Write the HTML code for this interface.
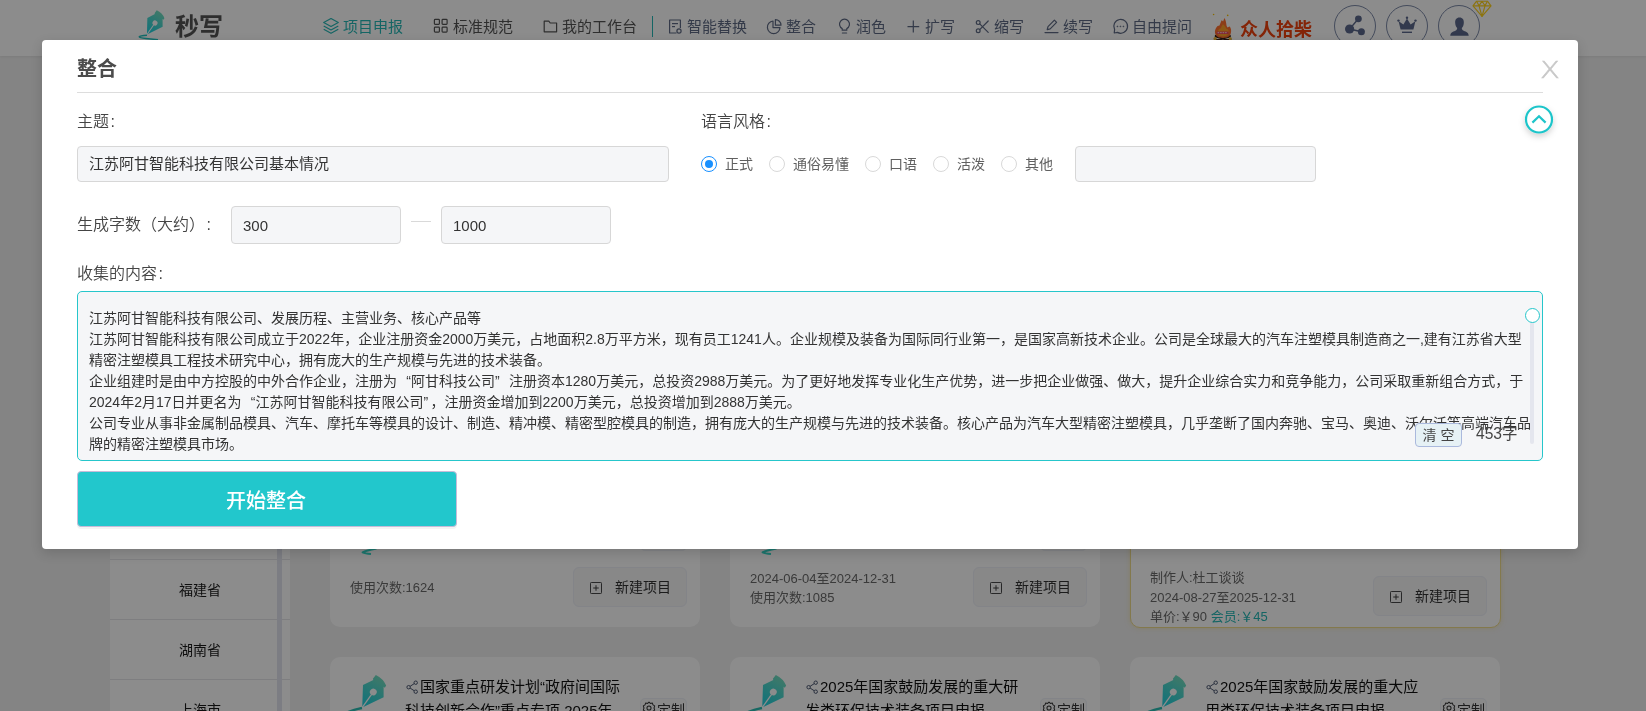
<!DOCTYPE html>
<html lang="zh-CN">
<head>
<meta charset="utf-8">
<title>秒写</title>
<style>
*{box-sizing:border-box;margin:0;padding:0}
html,body{width:1646px;height:711px;overflow:hidden;background:#f0f0f0;font-family:"Liberation Sans","Noto Sans CJK SC",sans-serif;}
#root{position:absolute;left:0;top:0;width:1646px;height:711px;will-change:transform}
#page{position:absolute;left:0;top:0;width:1646px;height:711px;overflow:hidden;background:#f0f0f0;color:#333}
#hdr{position:absolute;left:0;top:0;width:1646px;height:56px;background:#fff;box-shadow:0 1px 2px rgba(0,0,0,.06)}
.abs{position:absolute}
.nav{position:absolute;top:16px;height:22px;line-height:22px;font-size:15px;color:#5f6b85;white-space:nowrap}
.nav.dk{color:#555}
.nav.on{color:#26b8b6}
.ico{position:absolute}
.circ{position:absolute;top:5px;width:42px;height:42px;border:1px solid #7d8aa8;border-radius:50%}
.sl{left:110px;width:180px;height:1px;background:#e6e6ea}
.si{left:110px;width:180px;text-align:center;font-size:14px;line-height:22px;color:#1a1a1a}
.cd{position:absolute;width:370px;background:#fff;border-radius:10px}
.mt{position:absolute;font-size:13px;line-height:19px;color:#6a6a6a;white-space:nowrap}
.nb{position:absolute;width:114px;height:40px;background:#f7f7f8;border:1px solid #eef1f7;border-radius:6px;font-size:14px;line-height:22px;color:#333;white-space:nowrap}
.tt{position:absolute;font-size:15px;line-height:22px;color:#111;white-space:nowrap}
.tg{position:absolute;width:47px;height:24px;border:1px solid #eef1f7;border-radius:5px;background:#f9f9fa;font-size:14px;line-height:22px;color:#333;white-space:nowrap}
.q2{display:inline-block;width:5px}
#mask{position:absolute;left:0;top:0;width:1646px;height:711px;background:rgba(0,0,0,.45)}
#modal{position:absolute;left:42px;top:40px;width:1536px;height:509px;background:#fff;border-radius:4px;box-shadow:0 4px 12px rgba(0,0,0,.15);color:#444}
#modal .t{position:absolute;white-space:nowrap}
.lbl{font-size:16px;line-height:24px;color:#444;font-weight:350}
.inp{position:absolute;background:#f5f6f8;border:1px solid #d7d7d7;border-radius:4px;font-size:15px;color:#333;line-height:34px;padding-left:11px;white-space:nowrap}
.rad{position:absolute;top:116px;width:16px;height:16px;border:1px solid #d9d9d9;border-radius:50%;background:#fff}
.rad.on{border-color:#1890ff}
.rad.on:after{content:"";position:absolute;left:3px;top:3px;width:8px;height:8px;border-radius:50%;background:#1890ff}
.rl{position:absolute;top:113px;font-size:14px;line-height:22px;color:#606060;white-space:nowrap}
#ta{position:absolute;left:35px;top:251px;width:1466px;height:170px;border:1px solid #26c6cb;border-radius:5px;background:#f5f6f8;overflow:hidden}
.ql,.qr{display:inline-block;width:14px}.ql{text-align:right}.qr{text-align:left}
.cl{margin-left:1.6px}
#ta .ln{position:absolute;left:11px;white-space:nowrap;font-size:14px;line-height:21px;height:21px;color:#333}
</style>
</head>
<body>
<div id="root">
<div id="page">
  <div id="hdr">
    <!-- logo -->
    <svg class="ico" style="left:130px;top:0" width="50" height="56" viewBox="130 0 50 56">
      <defs><linearGradient id="lg" x1="0" y1="0" x2="0" y2="1"><stop offset="0" stop-color="#72dcc0"/><stop offset="1" stop-color="#16d0e2"/></linearGradient></defs>
      <g transform="translate(155 23) rotate(35) scale(0.737)">
        <path d="M0 19 L11.4 -1.8 L5.4 -10.2 L6.9 -10.2 L6.7 -12.7 Q0.5 -16.8 -7.9 -15.4 L-8.1 -10.6 L-7 -9.8 L-12.4 .4 Z" fill="url(#lg)"/>
        <circle cx="0" cy="0" r="3.4" fill="#fff"/>
        <path d="M0 2 L0 19" stroke="#fff" stroke-width="1.4"/>
      </g>
      <path d="M147 35.2 Q140 35.4 139.3 36.9 Q139.6 38 146 38.5 L158 39.7" fill="none" stroke="#22c4c0" stroke-width="1.6"/>
    </svg>
    <div class="abs" style="left:175px;top:10px;font-size:24px;line-height:34px;font-weight:bold;color:#555;white-space:nowrap">秒写</div>

    <!-- nav -->
    <svg class="ico" style="left:322px;top:17px" width="18" height="18" viewBox="0 0 18 18" fill="none" stroke="#26b8b6" stroke-width="1.2" stroke-linejoin="round"><path d="M9 1.5 L16.3 5.5 L9 9.5 L1.7 5.5 Z"/><path d="M1.7 9 L9 13 L16.3 9"/><path d="M1.7 12.3 L9 16.3 L16.3 12.3"/></svg>
    <div class="nav on" style="left:343px">项目申报</div>

    <svg class="ico" style="left:433px;top:18px" width="16" height="16" viewBox="0 0 16 16" fill="none" stroke="#555" stroke-width="1.2"><rect x="1.4" y="1.4" width="5" height="5" rx=".8"/><rect x="9.1" y="1.4" width="5" height="5" rx=".8"/><rect x="1.4" y="9.1" width="5" height="5" rx=".8"/><rect x="9.1" y="9.1" width="5" height="5" rx=".8"/></svg>
    <div class="nav dk" style="left:453px">标准规范</div>

    <svg class="ico" style="left:543px;top:19px" width="16" height="16" viewBox="0 0 16 16" fill="none" stroke="#555" stroke-width="1.2" stroke-linejoin="round"><path d="M1.2 2.2 H5.8 L7.2 4 H13.6 V12.8 H1.2 Z"/></svg>
    <div class="nav dk" style="left:562px">我的工作台</div>

    <div class="abs" style="left:652px;top:16px;width:1px;height:21px;background:#26b8b6"></div>

    <svg class="ico" style="left:668px;top:18px" width="16" height="18" viewBox="0 0 16 18" fill="none" stroke="#5f6b85" stroke-width="1.2" stroke-linejoin="round"><path d="M8.5 15 H1.6 V2 H12.4 V10"/><path d="M4 5.6 H10"/><path d="M4 8.6 H7"/><circle cx="11" cy="13" r="2.1"/></svg>
    <div class="nav" style="left:687px">智能替换</div>

    <svg class="ico" style="left:766px;top:18px" width="17" height="17" viewBox="0 0 17 17" fill="none" stroke="#5f6b85" stroke-width="1.2" stroke-linejoin="round"><path d="M7 3 A6.3 6.3 0 1 0 14 9.6 H7 Z"/><path d="M9.4 1.6 A5.6 5.6 0 0 1 15 7.2 H9.4 Z"/></svg>
    <div class="nav" style="left:786px">整合</div>

    <svg class="ico" style="left:837px;top:18px" width="15" height="18" viewBox="0 0 15 18" fill="none" stroke="#5f6b85" stroke-width="1.2" stroke-linecap="round" stroke-linejoin="round"><path d="M5.2 12.2 V10.6 A5 5 0 1 1 9.8 10.6 V12.2 Z"/><path d="M5.4 15 H9.6"/></svg>
    <div class="nav" style="left:856px">润色</div>

    <svg class="ico" style="left:906px;top:19px" width="15" height="15" viewBox="0 0 15 15" fill="none" stroke="#5f6b85" stroke-width="1.2"><path d="M7.3 1.6 V13.6 M1.5 7.7 H13.2"/></svg>
    <div class="nav" style="left:925px">扩写</div>

    <svg class="ico" style="left:975px;top:19px" width="15" height="16" viewBox="0 0 15 16" fill="none" stroke="#5f6b85" stroke-width="1.2" stroke-linecap="round"><circle cx="3.2" cy="3.6" r="1.9"/><circle cx="3.2" cy="11.8" r="1.9"/><path d="M4.7 4.8 L13.2 13.4 M4.7 10.6 L13.2 2"/></svg>
    <div class="nav" style="left:994px">缩写</div>

    <svg class="ico" style="left:1044px;top:18px" width="16" height="17" viewBox="0 0 16 17" fill="none" stroke="#5f6b85" stroke-width="1.2" stroke-linecap="round" stroke-linejoin="round"><path d="M3.2 11.6 L4 8.6 L10.4 2.2 L12.6 4.4 L6.2 10.8 Z"/><path d="M1 14.6 H14"/></svg>
    <div class="nav" style="left:1063px">续写</div>

    <svg class="ico" style="left:1112px;top:18px" width="17" height="17" viewBox="0 0 17 17" fill="none" stroke="#5f6b85" stroke-width="1.2" stroke-linejoin="round"><path d="M2.2 15 L2.6 11.6 A6.9 6.9 0 1 1 5.4 14.4 Z"/><circle cx="5.4" cy="8.4" r=".5" fill="#5f6b85" stroke-width=".6"/><circle cx="8.4" cy="8.4" r=".5" fill="#5f6b85" stroke-width=".6"/><circle cx="11.4" cy="8.4" r=".5" fill="#5f6b85" stroke-width=".6"/></svg>
    <div class="nav" style="left:1132px">自由提问</div>

    <!-- fire -->
    <svg class="ico" style="left:1206px;top:8px" width="36" height="36" viewBox="1206 8 36 36">
      <circle cx="1213.6" cy="14.5" r=".8" fill="#f7c100"/><circle cx="1227.7" cy="15.4" r=".8" fill="#f7c100"/>
      <path d="M1216 36.2 L1230.6 40.4 M1229.6 36.2 L1215 40.4" stroke="#3a2016" stroke-width="2.6" stroke-linecap="round"/>
      <path d="M1224.5 18 C1225.6 19.6 1226.2 22.5 1226.5 25.4 C1226.9 26.6 1227.3 27.2 1227.8 27.4 C1228.5 26.9 1229.2 26.4 1229.7 26.4 C1230.6 27.8 1231.3 29.5 1231.1 31.4 C1231 34 1229.8 36 1228 37 C1226 38.2 1220 38.2 1218 37 C1216 36 1214.8 34 1214.9 31.6 C1215.2 29 1216.4 27.2 1217.6 26 C1218.3 25.8 1219 25.8 1219.5 25.6 C1220.3 23.6 1220.9 21.8 1221.6 20.2 C1222.2 20.6 1222.7 21 1223.1 21.4 C1223.6 20.2 1224.1 19 1224.5 18 Z" fill="#ff6f2e"/>
      <path d="M1222.8 24.2 C1224.6 25.6 1225.8 27.4 1226.6 29 C1227.4 28.8 1227.9 29.2 1228.4 30 C1228.9 32 1228.4 34.6 1226.6 35.8 C1224.6 36.8 1221.4 36.8 1219.6 35.8 C1217.8 34.6 1217.3 32.2 1218.2 30.4 C1218.9 29.2 1219.7 28.6 1220.6 28.6 C1221.2 27.2 1222 25.6 1222.8 24.2 Z" fill="#ffa228"/>
      <rect x="1216.6" y="31.4" width="12" height="2.6" rx="1.3" fill="#ee4560"/>
      <path d="M1217.6 32.7 H1227.6" stroke="#ffd9de" stroke-width="1" stroke-dasharray="1.6 .9"/>
      <circle cx="1215.1" cy="38.6" r="1.6" fill="#e9b535"/><circle cx="1230.2" cy="38.6" r="1.6" fill="#e9b535"/>
    </svg>
    <div class="abs" style="left:1240px;top:17px;font-size:18px;line-height:26px;font-weight:bold;color:#f0420e;white-space:nowrap">众人拾柴</div>

    <!-- circles -->
    <div class="circ" style="left:1334px"></div>
    <svg class="ico" style="left:1344px;top:14px" width="22" height="24" viewBox="0 0 22 24"><g fill="#5c698c" stroke="#5c698c"><path d="M14.4 4.8 L5.6 15 L17.4 17.7" fill="none" stroke-width="1.4"/><circle cx="14.4" cy="4.8" r="3.4" stroke="none"/><circle cx="5.6" cy="15" r="4.6" stroke="none"/><circle cx="17.4" cy="17.7" r="3.5" stroke="none"/></g></svg>
    <div class="circ" style="left:1386px"></div>
    <svg class="ico" style="left:1397px;top:16px" width="20" height="19" viewBox="0 0 20 19" fill="#5c698c"><path d="M3.6 13.6 L1.6 5.2 L6.4 8.6 L10 2.4 L13.6 8.6 L18.4 5.2 L16.4 13.6 Z"/><circle cx="1.5" cy="4.6" r="1.2"/><circle cx="10" cy="1.8" r="1.2"/><circle cx="18.5" cy="4.6" r="1.2"/><rect x="5" y="15.6" width="10" height="1.4"/></svg>
    <div class="circ" style="left:1438px"></div>
    <svg class="ico" style="left:1448.5px;top:16.5px" width="21" height="20" viewBox="0 0 20 19" fill="#5c698c"><path d="M10 .5 C13 .5 14.3 2.8 14.1 5.6 C14 8 13 9.6 12.2 10.4 C12.2 11.6 12.6 12.4 14 13 C16.6 14 18.6 14.6 18.8 17.8 H1.2 C1.4 14.6 3.4 14 6 13 C7.4 12.4 7.8 11.6 7.8 10.4 C7 9.6 6 8 5.9 5.6 C5.7 2.8 7 .5 10 .5 Z"/></svg>
    <!-- diamond -->
    <svg class="ico" style="left:1472px;top:0" width="20" height="18" viewBox="0 0 20 18" fill="none" stroke="#ffd21a" stroke-width="1.15" stroke-linejoin="round"><path d="M4.6 1.2 H15.4 L19 5.8 L10 16.4 L1 5.8 Z"/><path d="M1 5.8 H19 M4.6 1.2 L7 5.8 L10 16.4 L13 5.8 L15.4 1.2 M10 1.2 L7 5.8 M10 1.2 L13 5.8"/></svg>
  </div>
  <div id="bg">
    <svg width="0" height="0" style="position:absolute"><defs><linearGradient id="lg2" x1="0" y1="0" x2="0" y2="1"><stop offset="0" stop-color="#72dcc0"/><stop offset="1" stop-color="#16d0e2"/></linearGradient></defs></svg>
    <!-- sidebar -->
    <div class="abs" style="left:110px;top:56px;width:180px;height:655px;background:#fff"></div>
    <div class="abs sl" style="top:559px"></div><div class="abs sl" style="top:619px"></div><div class="abs sl" style="top:679px"></div>
    <div class="abs si" style="top:579px">福建省</div>
    <div class="abs si" style="top:639px">湖南省</div>
    <div class="abs si" style="top:699px">上海市</div>
    <div class="abs" style="left:277px;top:56px;width:5px;height:655px;background:#e2e4ee"></div>

    <!-- row 1 cards -->
    <div class="cd" style="left:330px;top:300px;height:326.5px"></div>
    <div class="cd" style="left:730px;top:300px;height:326.5px"></div>
    <div class="cd" style="left:1130px;top:300px;width:370.5px;height:327.5px;border:1px solid #efdc8c;box-shadow:0 0 5px rgba(240,220,140,.55)"></div>
    <svg class="abs" style="left:355px;top:540px" width="30" height="16" viewBox="0 0 30 16" fill="none" stroke="#36d8c8" stroke-width="2" stroke-linejoin="round"><path d="M21.5 8.4 Q11 10.4 7.6 12.3 Q10 13.4 16 13.9"/></svg>
    <svg class="abs" style="left:755px;top:540px" width="30" height="16" viewBox="0 0 30 16" fill="none" stroke="#36d8c8" stroke-width="2" stroke-linejoin="round"><path d="M21.5 8.4 Q11 10.4 7.6 12.3 Q10 13.4 16 13.9"/></svg>
    <div class="tg" style="left:640px;top:527px"></div><div class="tg" style="left:1040px;top:527px"></div>
    <div class="mt" style="left:350px;top:578px">使用次数:1624</div>
    <div class="nb" style="left:573px;top:567px"><svg class="abs" style="left:16px;top:13.5px" width="12" height="12" viewBox="0 0 13 13" fill="none" stroke="#333" stroke-width="1"><rect x=".5" y=".5" width="12" height="12" rx="1"/><path d="M6.5 3.5 V9.5 M3.5 6.5 H9.5"/></svg><span class="abs" style="left:41px;top:8px">新建项目</span></div>
    <div class="mt" style="left:750px;top:569px">2024-06-04至2024-12-31</div>
    <div class="mt" style="left:750px;top:588px">使用次数:1085</div>
    <div class="nb" style="left:973px;top:567px"><svg class="abs" style="left:16px;top:13.5px" width="12" height="12" viewBox="0 0 13 13" fill="none" stroke="#333" stroke-width="1"><rect x=".5" y=".5" width="12" height="12" rx="1"/><path d="M6.5 3.5 V9.5 M3.5 6.5 H9.5"/></svg><span class="abs" style="left:41px;top:8px">新建项目</span></div>
    <div class="mt" style="left:1150px;top:568px">制作人:杜工谈谈</div>
    <div class="mt" style="left:1150px;top:588px">2024-08-27至2025-12-31</div>
    <div class="mt" style="left:1150px;top:607px">单价:￥90 <span style="color:#26b8b6">会员:￥45</span></div>
    <div class="nb" style="left:1373px;top:576px"><svg class="abs" style="left:16px;top:13.5px" width="12" height="12" viewBox="0 0 13 13" fill="none" stroke="#333" stroke-width="1"><rect x=".5" y=".5" width="12" height="12" rx="1"/><path d="M6.5 3.5 V9.5 M3.5 6.5 H9.5"/></svg><span class="abs" style="left:41px;top:8px">新建项目</span></div>

    <!-- row 2 cards -->
    <div class="cd" style="left:330px;top:657px;height:200px"></div>
    <div class="cd" style="left:730px;top:657px;height:200px"></div>
    <div class="cd" style="left:1130px;top:657px;height:200px"></div>
    <svg class="abs" style="left:340px;top:660px" width="60" height="51" viewBox="340 660 60 51"><g transform="translate(373.3 692) rotate(35.6) scale(1)"><path d="M0 19 L11.4 -1.8 L5.4 -10.2 L6.9 -10.2 L6.7 -12.7 Q0.5 -16.8 -7.9 -15.4 L-8.1 -10.6 L-7 -9.8 L-12.4 .4 Z" fill="url(#lg2)"/><circle cx="0" cy="0" r="3.4" fill="#fff"/><path d="M0 2 L0 19.5" stroke="#fff" stroke-width="1.3"/></g><path d="M362 708 Q352 710 346 713" fill="none" stroke="#2bbfb5" stroke-width="2.4"/></svg>
    <svg class="abs" style="left:740px;top:660px" width="60" height="51" viewBox="340 660 60 51"><g transform="translate(373.3 692) rotate(35.6) scale(1)"><path d="M0 19 L11.4 -1.8 L5.4 -10.2 L6.9 -10.2 L6.7 -12.7 Q0.5 -16.8 -7.9 -15.4 L-8.1 -10.6 L-7 -9.8 L-12.4 .4 Z" fill="url(#lg2)"/><circle cx="0" cy="0" r="3.4" fill="#fff"/><path d="M0 2 L0 19.5" stroke="#fff" stroke-width="1.3"/></g><path d="M362 708 Q352 710 346 713" fill="none" stroke="#2bbfb5" stroke-width="2.4"/></svg>
    <svg class="abs" style="left:1140px;top:660px" width="60" height="51" viewBox="340 660 60 51"><g transform="translate(373.3 692) rotate(35.6) scale(1)"><path d="M0 19 L11.4 -1.8 L5.4 -10.2 L6.9 -10.2 L6.7 -12.7 Q0.5 -16.8 -7.9 -15.4 L-8.1 -10.6 L-7 -9.8 L-12.4 .4 Z" fill="url(#lg2)"/><circle cx="0" cy="0" r="3.4" fill="#fff"/><path d="M0 2 L0 19.5" stroke="#fff" stroke-width="1.3"/></g><path d="M362 708 Q352 710 346 713" fill="none" stroke="#2bbfb5" stroke-width="2.4"/></svg>
    <svg class="abs" style="left:406px;top:679.5px" width="12.6" height="14.4" viewBox="0 0 14 16" fill="none" stroke="#4a5670" stroke-width="1.1"><circle cx="2.9" cy="8" r="1.9"/><circle cx="10.8" cy="3" r="1.9"/><circle cx="10.8" cy="13" r="1.9"/><path d="M4.6 7 L9.2 4 M4.6 9 L9.2 12"/></svg>
    <div class="tt" style="left:420px;top:676px">国家重点研发计划<span class="q2">“</span>政府间国际</div>
    <div class="tt" style="left:405px;top:700px">科技创新合作<span class="q2">”</span>重点专项 2025年</div>
    <div class="tg" style="left:640px;top:698px"><svg class="abs" style="left:1px;top:2px" width="14" height="14" viewBox="0 0 15 15" fill="none" stroke="#333" stroke-width="1.1" stroke-linejoin="round"><path d="M7.5 1.2 L9 2.6 L11 2.2 L11.8 4.2 L13.6 5.2 L12.9 7.5 L13.6 9.8 L11.8 10.8 L11 12.8 L9 12.4 L7.5 13.8 L6 12.4 L4 12.8 L3.2 10.8 L1.4 9.8 L2.1 7.5 L1.4 5.2 L3.2 4.2 L4 2.2 L6 2.6 Z"/><circle cx="7.5" cy="7.5" r="2.2"/></svg><span class="abs" style="left:16px;top:0px">定制</span></div>
    <svg class="abs" style="left:806px;top:679.5px" width="12.6" height="14.4" viewBox="0 0 14 16" fill="none" stroke="#4a5670" stroke-width="1.1"><circle cx="2.9" cy="8" r="1.9"/><circle cx="10.8" cy="3" r="1.9"/><circle cx="10.8" cy="13" r="1.9"/><path d="M4.6 7 L9.2 4 M4.6 9 L9.2 12"/></svg>
    <div class="tt" style="left:820px;top:676px">2025年国家鼓励发展的重大研</div>
    <div class="tt" style="left:805px;top:700px">发类环保技术装备项目申报</div>
    <div class="tg" style="left:1040px;top:698px"><svg class="abs" style="left:1px;top:2px" width="14" height="14" viewBox="0 0 15 15" fill="none" stroke="#333" stroke-width="1.1" stroke-linejoin="round"><path d="M7.5 1.2 L9 2.6 L11 2.2 L11.8 4.2 L13.6 5.2 L12.9 7.5 L13.6 9.8 L11.8 10.8 L11 12.8 L9 12.4 L7.5 13.8 L6 12.4 L4 12.8 L3.2 10.8 L1.4 9.8 L2.1 7.5 L1.4 5.2 L3.2 4.2 L4 2.2 L6 2.6 Z"/><circle cx="7.5" cy="7.5" r="2.2"/></svg><span class="abs" style="left:16px;top:0px">定制</span></div>
    <svg class="abs" style="left:1206px;top:679.5px" width="12.6" height="14.4" viewBox="0 0 14 16" fill="none" stroke="#4a5670" stroke-width="1.1"><circle cx="2.9" cy="8" r="1.9"/><circle cx="10.8" cy="3" r="1.9"/><circle cx="10.8" cy="13" r="1.9"/><path d="M4.6 7 L9.2 4 M4.6 9 L9.2 12"/></svg>
    <div class="tt" style="left:1220px;top:676px">2025年国家鼓励发展的重大应</div>
    <div class="tt" style="left:1205px;top:700px">用类环保技术装备项目申报</div>
    <div class="tg" style="left:1440px;top:698px"><svg class="abs" style="left:1px;top:2px" width="14" height="14" viewBox="0 0 15 15" fill="none" stroke="#333" stroke-width="1.1" stroke-linejoin="round"><path d="M7.5 1.2 L9 2.6 L11 2.2 L11.8 4.2 L13.6 5.2 L12.9 7.5 L13.6 9.8 L11.8 10.8 L11 12.8 L9 12.4 L7.5 13.8 L6 12.4 L4 12.8 L3.2 10.8 L1.4 9.8 L2.1 7.5 L1.4 5.2 L3.2 4.2 L4 2.2 L6 2.6 Z"/><circle cx="7.5" cy="7.5" r="2.2"/></svg><span class="abs" style="left:16px;top:0px">定制</span></div>
  </div>
</div>
<div id="mask"></div>
<div id="modal">
    <div class="t" style="left:35px;top:14px;font-size:20px;line-height:30px;font-weight:bold;color:#4c4c4c">整合</div>
    <div class="t" style="left:1498px;top:15px;width:20px;text-align:center;font-family:'DejaVu Sans','Liberation Sans',sans-serif;font-weight:200;font-size:23.8px;line-height:30px;color:#c8c8c8;-webkit-text-stroke:.5px #c8c8c8;transform:scaleX(1.22)">X</div>
    <div class="abs" style="left:35px;top:52px;width:1466px;height:1px;background:#ddd"></div>

    <div class="t lbl" style="left:35px;top:70px">主题<span class="cl">:</span></div>
    <div class="inp" style="left:35px;top:106px;width:592px;height:36px">江苏阿甘智能科技有限公司基本情况</div>

    <div class="t lbl" style="left:659px;top:70px">语言风格<span class="cl">:</span></div>
    <div class="rad on" style="left:659px"></div><div class="rl" style="left:683px">正式</div>
    <div class="rad" style="left:727px"></div><div class="rl" style="left:751px">通俗易懂</div>
    <div class="rad" style="left:823px"></div><div class="rl" style="left:847px">口语</div>
    <div class="rad" style="left:891px"></div><div class="rl" style="left:915px">活泼</div>
    <div class="rad" style="left:959px"></div><div class="rl" style="left:983px">其他</div>
    <div class="inp" style="left:1033px;top:106px;width:241px;height:36px"></div>

    <!-- collapse -->
    <svg class="abs" style="left:1477px;top:60px;overflow:visible" width="40" height="44" viewBox="0 0 40 44"><defs><filter id="sh" x="-50%" y="-50%" width="200%" height="220%"><feDropShadow dx="0" dy="3" stdDeviation="3" flood-color="#000" flood-opacity=".18"/></filter></defs><circle cx="20" cy="19.5" r="13" fill="#fff" stroke="#1fc5ca" stroke-width="2.2" filter="url(#sh)"/><path d="M13.4 22.6 L20 16.2 L26.6 22.6" fill="none" stroke="#1fc5ca" stroke-width="2.2"/></svg>

    <div class="t lbl" style="left:35px;top:173px">生成字数（大约）<span class="cl">:</span></div>
    <div class="inp" style="left:189px;top:166px;width:170px;height:38px;line-height:37px">300</div>
    <div class="abs" style="left:369px;top:181px;width:20px;height:1px;background:#d9d9d9"></div>
    <div class="inp" style="left:399px;top:166px;width:170px;height:38px;line-height:37px">1000</div>

    <div class="t lbl" style="left:35px;top:222px">收集的内容<span class="cl">:</span></div>
    <div id="ta">
      <div class="ln" style="top:16px">江苏阿甘智能科技有限公司、发展历程、主营业务、核心产品等</div>
      <div class="ln" style="top:37px">江苏阿甘智能科技有限公司成立于2022年，企业注册资金2000万美元，占地面积2.8万平方米，现有员工1241人。企业规模及装备为国际同行业第一，是国家高新技术企业。公司是全球最大的汽车注塑模具制造商之一,建有江苏省大型</div>
      <div class="ln" style="top:58px">精密注塑模具工程技术研究中心，拥有庞大的生产规模与先进的技术装备。</div>
      <div class="ln" style="top:79px">企业组建时是由中方控股的中外合作企业，注册为<span class="ql">“</span>阿甘科技公司<span class="qr">”</span>注册资本1280万美元，总投资2988万美元。为了更好地发挥专业化生产优势，进一步把企业做强、做大，提升企业综合实力和竞争能力，公司采取重新组合方式，于</div>
      <div class="ln" style="top:100px">2024年2月17日并更名为<span class="ql">“</span>江苏阿甘智能科技有限公司<span class="qr" style="width:7px">”</span>，注册资金增加到2200万美元，总投资增加到2888万美元。</div>
      <div class="ln" style="top:121px">公司专业从事非金属制品模具、汽车、摩托车等模具的设计、制造、精冲模、精密型腔模具的制造，拥有庞大的生产规模与先进的技术装备。核心产品为汽车大型精密注塑模具，几乎垄断了国内奔驰、宝马、奥迪、沃尔沃等高端汽车品</div>
      <div class="ln" style="top:142px">牌的精密注塑模具市场。</div>
      <div class="abs" style="left:1452px;top:30px;width:4px;height:122px;border-radius:2px;background:#e4e6ee"></div>
      <div class="abs" style="left:1446.5px;top:15.5px;width:15px;height:15px;border-radius:50%;background:#fff;border:1.5px solid #26c6cb"></div>
      <div class="abs" style="left:1337px;top:131px;width:47px;height:24px;border:1px solid #aab9dd;border-radius:4px;background:#e6f1f5;font-size:14px;line-height:22px;color:#444;text-align:center;white-space:nowrap">清 空</div>
      <div class="abs" style="left:1398px;top:131px;font-size:15.6px;line-height:22px;color:#444;white-space:nowrap">453字</div>
    </div>

    <div class="abs" style="left:35px;top:431px;width:380px;height:56px;background:#22c7cc;border:1px solid #c6bcd8;border-radius:4px;box-shadow:0 2px 0 rgba(0,0,0,.045);color:#fff;font-size:20px;line-height:58px;text-align:center;font-weight:500;white-space:nowrap;padding-right:2px">开始整合</div>
  </div>
</div>
</body>
</html>
